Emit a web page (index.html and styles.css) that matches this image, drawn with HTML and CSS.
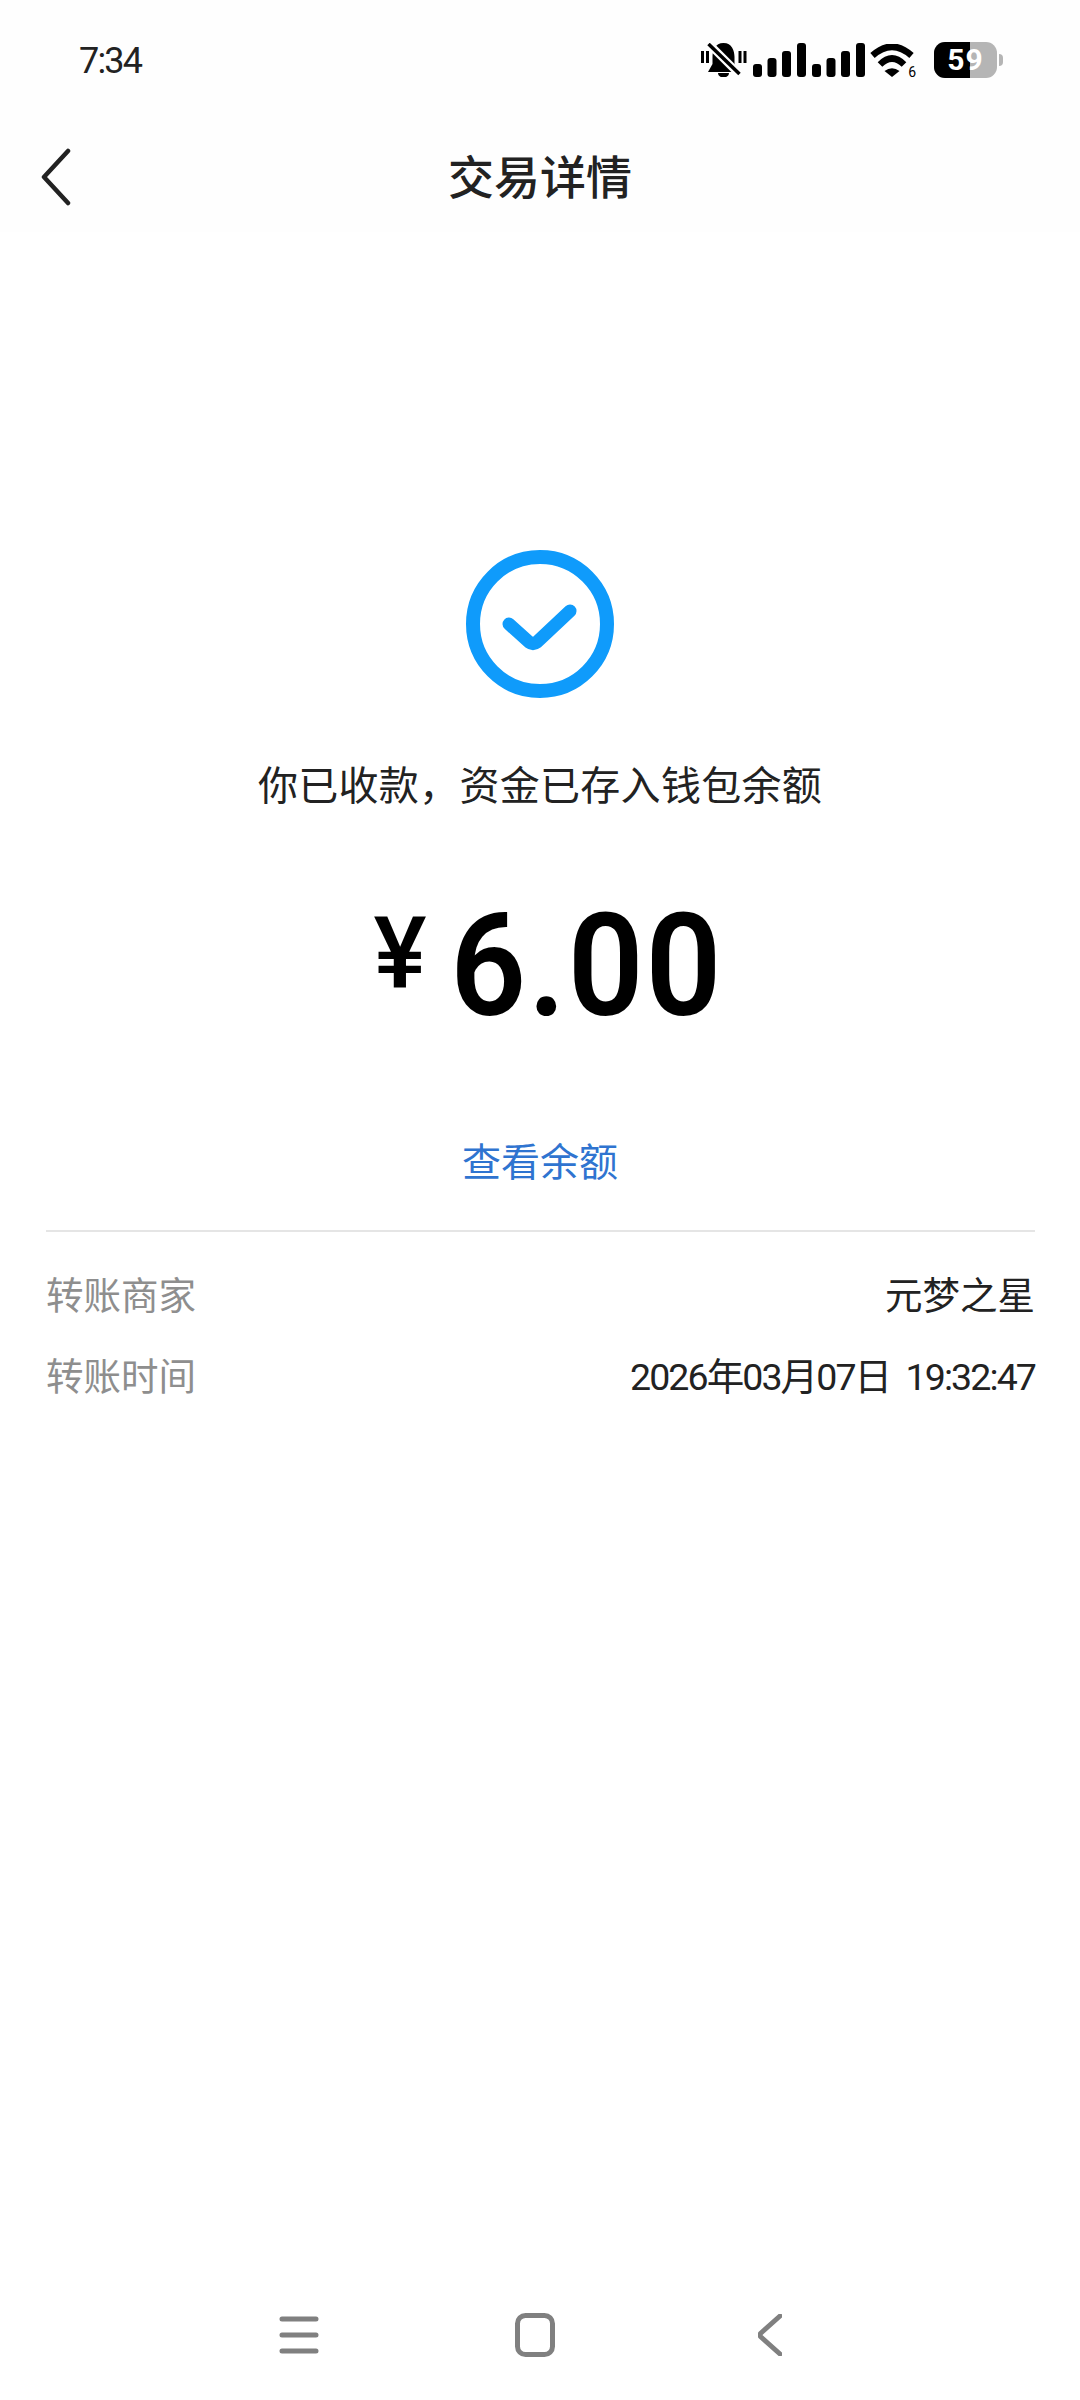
FILE: index.html
```html
<!DOCTYPE html>
<html lang="zh-CN">
<head>
    <meta charset="UTF-8">
    <meta name="viewport" content="width=device-width, initial-scale=1.0">
    <title>交易详情</title>
    <link rel="stylesheet" href="styles.css">
</head>
<body>
    <div class="status-bar">
        <span class="status-time">7:34</span>
        <div class="status-icons">
            <svg class="icon-bell" width="46" height="34" viewBox="0 0 46 34">
                <path d="M1.500 8v12M6.500 8v12M39 8v12M44 8v12" stroke="#000" stroke-width="3" fill="none"/>
                <path d="M22.500 0C14 0 11.500 8 11.500 14V21L7 29H38L33.500 21V14C33.500 8 31 0 22.500 0Z" fill="#000"/>
                <path d="M17 30H28C28 36 17 36 17 30Z" fill="#000"/>
                <path d="M7 0L39 32" stroke="#fff" stroke-width="8" fill="none"/>
                <path d="M7.500 1L38.500 31" stroke="#000" stroke-width="3.500" fill="none"/>
            </svg>
            <svg class="icon-signal" width="113" height="34" viewBox="0 0 113 34">
                <rect x="0" y="21" width="9" height="13" rx="3"/>
                <rect x="14.500" y="15" width="9" height="19" rx="3"/>
                <rect x="29" y="8" width="9" height="26" rx="3"/>
                <rect x="44" y="0" width="9" height="34" rx="3"/>
                <rect x="59" y="21" width="9" height="13" rx="3"/>
                <rect x="73.500" y="15" width="9" height="19" rx="3"/>
                <rect x="88" y="8" width="9" height="26" rx="3"/>
                <rect x="103" y="0" width="9" height="34" rx="3"/>
            </svg>
            <div class="wifi">
                <svg width="44" height="33" viewBox="0 0 44 33">
                    <path d="M2.500 11.500Q22 -6 41.500 11.500" stroke="#000" stroke-width="6.500" fill="none"/>
                    <path d="M10 20.500Q22 8.500 34 20.500" stroke="#000" stroke-width="6.500" fill="none"/>
                    <path d="M14.500 27L22 33L29.500 27Q22 21.500 14.500 27Z" fill="#000"/>
                </svg>
                <span class="wifi-label">6</span>
            </div>
            <div class="battery">
                <div class="battery-body">
                    <div class="battery-fill" style="width: 57%"></div>
                    <span class="battery-text">59</span>
                </div>
                <div class="battery-nub"></div>
            </div>
        </div>
    </div>

    <header class="nav">
        <svg class="nav-back" width="32" height="58" viewBox="0 0 32 58">
            <path d="M28 3L4 29L28 55" stroke="#222" stroke-width="4.500" fill="none" stroke-linecap="round" stroke-linejoin="round"/>
        </svg>
        <h1>交易详情</h1>
    </header>

    <main class="result">
        <svg class="result-icon" width="148" height="148" viewBox="0 0 148 148">
            <circle cx="74" cy="74" r="67" stroke="#0f9bfb" stroke-width="14" fill="none"/>
            <path d="M43 74L63 92Q67 95 71 92L104 61" stroke="#0f9bfb" stroke-width="13" fill="none" stroke-linecap="round" stroke-linejoin="round"/>
        </svg>
        <p class="result-msg">你已收款，资金已存入钱包余额</p>
        <div class="amount">
            <span class="amount-sign">¥</span>
            <span class="amount-value">6.00</span>
        </div>
        <a class="balance-link" href="#">查看余额</a>
    </main>

    <section class="details">
        <div class="detail-row">
            <span class="detail-label">转账商家</span>
            <span class="detail-value">元梦之星</span>
        </div>
        <div class="detail-row">
            <span class="detail-label">转账时间</span>
            <span class="detail-value detail-time">2026年03月07日 19:32:47</span>
        </div>
    </section>

    <footer class="nav-bar">
        <svg width="40" height="40" viewBox="0 0 40 40">
            <path d="M3 4H37M3 20H37M3 36H37" stroke="#808080" stroke-width="5" fill="none" stroke-linecap="round"/>
        </svg>
        <svg class="nav-home" width="40" height="44" viewBox="0 0 40 44">
            <rect x="2.500" y="2.500" width="35" height="39" rx="8" stroke="#808080" stroke-width="5" fill="none"/>
        </svg>
        <svg width="24" height="42" viewBox="0 0 24 42">
            <path d="M22 2L3 19Q1 21 3 23L22 40" stroke="#808080" stroke-width="5" fill="none" stroke-linecap="round"/>
        </svg>
    </footer>
</body>
</html>
```

FILE: styles.css
```css
* {
    box-sizing: border-box;
}
body {
    margin: 0;
    width: 1080px;
    height: 2400px;
    display: flex;
    flex-direction: column;
    background-color: #fff;
    color: #111;
    font-family: Roboto, "Noto Sans CJK SC", sans-serif;
}
.status-bar {
    height: 122px;
    padding: 0 77px 2px 79px;
    display: flex;
    align-items: center;
    justify-content: space-between;
    background-color: #fefefe;
}
.status-time {
    font-size: 36px;
    color: #222;
    letter-spacing: -1.800px;
    margin-top: 2px;
}
.status-icons {
    display: flex;
    align-items: center;
}
.icon-bell {
    margin-right: 6px;
}
.icon-signal {
    margin-right: 4px;
}
.wifi {
    position: relative;
    width: 44px;
    height: 33px;
    margin-right: 20px;
}
.wifi svg {
    display: block;
}
.wifi-label {
    position: absolute;
    right: -2px;
    bottom: -2px;
    font-size: 14px;
    line-height: 13px;
    color: #000;
    background: #fefefe;
}
.battery {
    display: flex;
    align-items: center;
}
.battery-body {
    position: relative;
    width: 63px;
    height: 36px;
    border-radius: 11px;
    overflow: hidden;
    background: #b5b5b5;
}
.battery-fill {
    height: 100%;
    background: #000;
}
.battery-text {
    position: absolute;
    inset: 0;
    text-align: center;
    font-size: 30px;
    line-height: 36px;
    font-weight: 700;
    letter-spacing: 1px;
    color: #fff;
}
.battery-nub {
    width: 4px;
    height: 12px;
    margin-left: 2px;
    background: #b5b5b5;
    border-radius: 0 4px 4px 0;
}
.nav {
    position: relative;
    height: 110px;
    padding-bottom: 6px;
    display: flex;
    align-items: center;
    justify-content: center;
    background-color: #fefefe;
}
.nav-back {
    position: absolute;
    left: 40px;
    top: 26px;
}
.nav h1 {
    margin: 0;
    font-size: 46px;
    font-weight: 500;
    color: #222;
}
.result {
    padding-top: 318px;
    display: flex;
    flex-direction: column;
    align-items: center;
}
.result-icon {
    display: block;
}
.result-msg {
    margin: 61px 0 0;
    font-size: 40px;
    line-height: 56px;
    letter-spacing: 0.300px;
    color: #222;
}
.amount {
    margin-top: 71px;
    height: 160px;
    padding-left: 27px;
    display: flex;
    align-items: center;
    gap: 13px;
    color: #000;
}
.amount-sign {
    font-size: 100px;
    font-weight: 500;
    line-height: 96px;
    margin-top: -24px;
}
.amount-value {
    font-size: 143px;
    font-weight: 600;
    letter-spacing: 2px;
    line-height: 160px;
    transform: scaleX(0.93);
}
.balance-link {
    margin-top: 89px;
    font-size: 39px;
    line-height: 56px;
    color: #2f74d0;
    text-decoration: none;
}
.details {
    margin: 39px 45px 0 46px;
    padding-top: 20px;
    border-top: 2px solid #e5e5e5;
}
.detail-row {
    height: 81px;
    display: flex;
    align-items: center;
    justify-content: space-between;
}
.detail-label {
    font-size: 37.500px;
    color: #8e8e8e;
}
.detail-value {
    font-size: 37.500px;
    color: #222;
}
.detail-time {
    letter-spacing: -1.900px;
    word-spacing: 8px;
}
.nav-bar {
    margin-top: auto;
    height: 100px;
    padding: 0 298px 30px 279px;
    display: flex;
    align-items: center;
    justify-content: space-between;
}
.nav-home {
    margin-right: 8px;
}
```
